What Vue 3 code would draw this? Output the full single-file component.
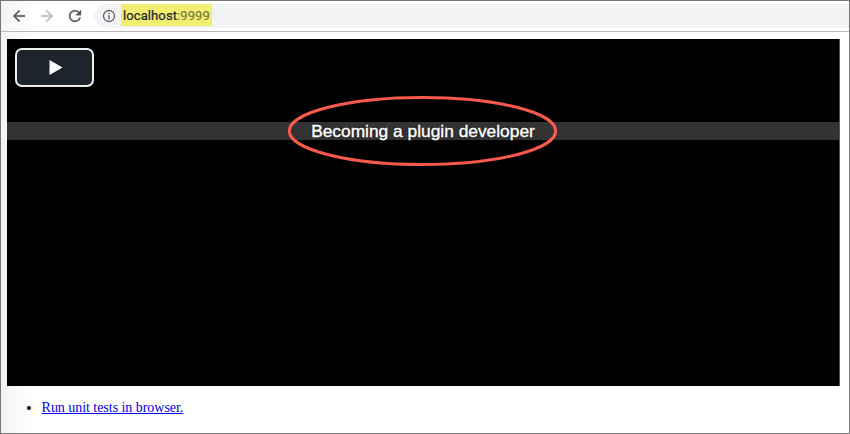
<script setup>
const address = { host: 'localhost', port: ':9999' }
const caption = 'Becoming a plugin developer'
</script>

<template>
  <div class="window">
    <header class="toolbar">
      <nav class="nav">
        <svg class="icon" viewBox="0 0 24 24"><path d="M20 11H7.83l5.59-5.59L12 4l-8 8 8 8 1.41-1.41L7.83 13H20v-2z" /></svg>
        <svg class="icon faded" viewBox="0 0 24 24"><path d="M12 4l-1.41 1.41L16.17 11H4v2h12.17l-5.58 5.59L12 20l8-8z" /></svg>
        <svg class="icon" viewBox="0 0 24 24"><path d="M17.65 6.35A7.96 7.96 0 0 0 12 4a8 8 0 1 0 7.73 10h-2.08A6 6 0 1 1 12 6c1.66 0 3.14.69 4.22 1.78L13 11h7V4l-2.35 2.35z" /></svg>
      </nav>
      <div class="omnibox">
        <svg class="info" viewBox="0 0 14 14">
          <circle cx="7" cy="7" r="5.5" fill="none" stroke="#5f6368" stroke-width="1.3" />
          <path d="M6.3 3.8h1.4v1.4H6.3zM6.3 6.2h1.4v4H6.3z" fill="#5f6368" />
        </svg>
        <span class="url">{{ address.host }}<span class="port">{{ address.port }}</span></span>
      </div>
    </header>
    <main class="page">
      <section class="player">
        <button class="play" aria-label="Play">
          <svg viewBox="0 0 14 16"><path d="M0.5 0.5L13.5 8L0.5 15.5z" fill="#fff" /></svg>
        </button>
        <div class="caption">{{ caption }}</div>
        <svg class="ring" viewBox="0 0 271 72"><ellipse cx="135.5" cy="36" rx="133.2" ry="33.5" /></svg>
      </section>
      <ul class="links">
        <li><a href="#">Run unit tests in browser.</a></li>
      </ul>
    </main>
  </div>
</template>

<style>
body {
  margin: 0;
  overflow: hidden;
}
</style>

<style scoped>
.window {
  box-sizing: border-box;
  width: 850px;
  height: 434px;
  border: 1px solid #777;
  background: linear-gradient(90deg, #f3f3f3 0, #fff 34px);
  overflow: hidden;
}
.toolbar {
  box-sizing: border-box;
  height: 31px;
  padding-top: 3px;
  display: flex;
  border-bottom: 1px solid #b9b9b9;
}
.nav {
  display: flex;
  gap: 10px;
  padding: 3px 10px 0 9px;
}
.icon {
  width: 18px;
  height: 18px;
  fill: #55585c;
  stroke: #55585c;
  stroke-width: 0.4;
}
.icon.faded {
  fill: #b9bbbd;
  stroke: #b9bbbd;
}
.omnibox {
  flex: 1;
  height: 24px;
  display: flex;
  background: #f1f3f4;
  border-radius: 12px 0 0 12px;
}
.info {
  width: 14px;
  height: 14px;
  margin: 5px 5px 0 8px;
}
.url {
  box-sizing: border-box;
  width: 91px;
  height: 22px;
  padding-left: 2px;
  background: #f1ee70;
  color: #202124;
  font: 13px/23px Roboto, sans-serif;
  letter-spacing: 0.1px;
  -webkit-text-stroke: 0.2px currentColor;
  white-space: nowrap;
}
.port {
  color: #7b7b43;
}
.page {
  padding: 7px 9px 0 6px;
}
.player {
  position: relative;
  box-sizing: border-box;
  width: 833px;
  height: 347px;
  padding-top: 9px;
  background: #000;
  border-right: 1px solid #555;
}
.play {
  box-sizing: border-box;
  display: flex;
  align-items: center;
  justify-content: center;
  width: 79px;
  height: 39px;
  margin: 0 0 35px 8px;
  padding: 0 0 0 2px;
  background: #1d242b;
  border: 2px solid #eee;
  border-radius: 7px;
}
.play svg {
  width: 14px;
  height: 17px;
}
.caption {
  height: 18px;
  background: #333;
  color: #fff;
  font: 17.35px/18px "Liberation Sans", Arial, sans-serif;
  text-align: center;
  text-shadow: 0 0 2px #000;
  -webkit-text-stroke: 0.4px #fff;
}
.ring {
  position: absolute;
  left: 280px;
  top: 56px;
  width: 271px;
  height: 72px;
}
.ring ellipse {
  fill: none;
  stroke: #f95a4c;
  stroke-width: 3;
}
.links {
  margin: 13px 0 0;
  padding-left: 34.6px;
  font: 14px/18px "Liberation Serif", "Times New Roman", serif;
  letter-spacing: -0.04px;
}
.links a {
  color: #0000ee;
}
</style>
